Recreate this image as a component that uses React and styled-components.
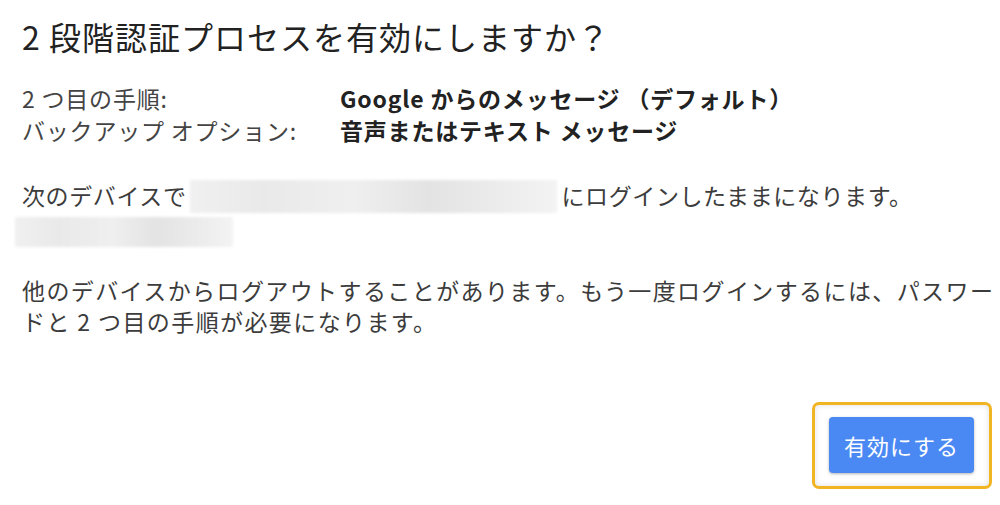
import React from "react";
import styled, { createGlobalStyle } from "styled-components";

const Global = createGlobalStyle`
  html, body { margin: 0; padding: 0; background: #fff; }
  body { font-family: "Noto Sans CJK JP", "Noto Sans", sans-serif; }
`;

const Page = styled.div`
  width: 1000px;
  height: 505px;
  box-sizing: border-box;
  padding: 14px 0 0 22px;
  display: flex;
  flex-direction: column;
  color: #3c3c3c;
  overflow: hidden;
`;

const Title = styled.h1`
  margin: 0;
  font-size: 32px;
  font-weight: 400;
  line-height: 44px;
  color: #222;
  letter-spacing: 1px;
`;

const Table = styled.div`
  margin-top: 24px;
  display: grid;
  grid-template-columns: 318px auto;
  font-size: 23px;
  line-height: 32px;
`;

const Label = styled.div`
  color: #444;
  letter-spacing: 0.8px;
`;

const Value = styled.div`
  font-weight: 700;
  color: #222;
  letter-spacing: 0.8px;
`;

const Para = styled.p`
  margin: ${(p) => p.$top}px 0 0 0;
  font-size: 23px;
  line-height: 31px;
  color: #3c3c3c;
  width: 978px;
  letter-spacing: ${(p) => p.$ls}px;
`;

const Redact = styled.span`
  display: inline-block;
  vertical-align: middle;
  width: ${(p) => p.$w}px;
  height: ${(p) => p.$h}px;
  margin: ${(p) => p.$m};
  background: linear-gradient(
    90deg,
    #f0f0f0 0%,
    #e9e9e9 20%,
    #efefef 45%,
    #e3e3e3 65%,
    #ececec 85%,
    #f3f3f3 100%
  );
  filter: blur(1.5px);
`;

const Footer = styled.div`
  margin-top: auto;
  margin-bottom: 16px;
  display: flex;
  justify-content: flex-end;
  padding-right: 8px;
`;

const Highlight = styled.div`
  border: 3px solid #f1b523;
  border-radius: 7px;
  padding: 12px 15px 13px 14px;
  box-shadow: inset 0 0 6px rgba(0, 0, 0, 0.12);
`;

const Button = styled.button`
  width: 145px;
  height: 56px;
  border: none;
  border-radius: 4px;
  background: #4a89f3;
  color: #fff;
  font-family: "Noto Sans CJK JP", sans-serif;
  font-size: 22px;
  letter-spacing: 1px;
  box-shadow: 0 1px 3px rgba(0, 0, 0, 0.3);
  cursor: pointer;
`;

export default function App() {
  return (
    <>
      <Global />
      <Page>
        <Title>2 段階認証プロセスを有効にしますか？</Title>
        <Table>
          <Label>2 つ目の手順:</Label>
          <Value>Google からのメッセージ （デフォルト）</Value>
          <Label>バックアップ オプション:</Label>
          <Value>音声またはテキスト メッセージ</Value>
        </Table>
        <Para $top={34} $ls={0.6}>
          次のデバイスで
          <Redact $w={367} $h={33} $m="-4px 5px 0 3px" />
          にログインしたままになります。
          <br />
          <Redact $w={218} $h={30} $m="0 0 0 -7px" />
        </Para>
        <Para $top={28} $ls={1.4}>
          他のデバイスからログアウトすることがあります。もう一度ログインするには、パスワードと 2 つ目の手順が必要になります。
        </Para>
        <Footer>
          <Highlight>
            <Button>有効にする</Button>
          </Highlight>
        </Footer>
      </Page>
    </>
  );
}
